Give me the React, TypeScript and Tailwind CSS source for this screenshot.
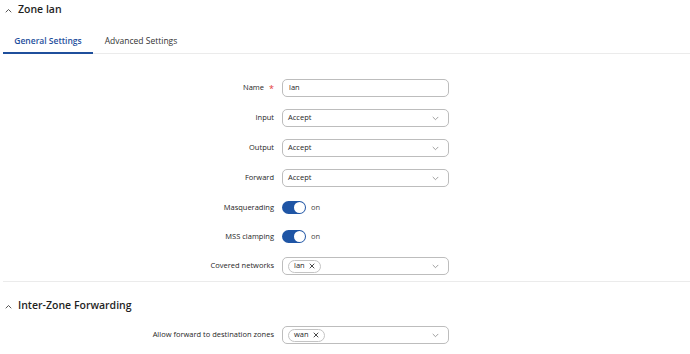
import React from 'react';

const font = { fontFamily: '"Open Sans", "Noto Sans", sans-serif' };

const Chevron = () => (
  <svg width="7" height="5" viewBox="0 0 7 5" className="text-[#888]">
    <path d="M1 1.2l2.5 2.5L6 1.2" fill="none" stroke="currentColor" strokeWidth="0.8" strokeLinecap="round" strokeLinejoin="round" />
  </svg>
);

const Caret = () => (
  <svg width="7" height="5" viewBox="0 0 7 5" className="text-[#444]">
    <path d="M1 4l2.5-2.5L6 4" fill="none" stroke="currentColor" strokeWidth="0.9" strokeLinecap="round" strokeLinejoin="round" />
  </svg>
);

const Row: React.FC<{ label: string; required?: boolean; h: string; children: React.ReactNode }> = ({ label, required, h, children }) => (
  <div className={`flex items-center ${h}`}>
    <div className="w-[274px] flex justify-end items-center text-[7.5px] text-[#262626]">
      <span>{label}</span>
      {required && <span className="ml-[5px] text-[#e53935] text-[9px] leading-none">*</span>}
    </div>
    <div className="ml-[8px]">{children}</div>
  </div>
);

const Select = ({ value }: { value: string }) => (
  <div className="w-[167px] h-[18px] rounded-[5px] border border-[#bdbdbd] flex items-center justify-between pl-[5px] pr-[9px] text-[7.5px] text-[#262626]">
    <span>{value}</span>
    <Chevron />
  </div>
);

const Chip = ({ text }: { text: string }) => (
  <span className="h-[13px] rounded-full border border-[#c4c4c4] px-[5px] flex items-center gap-[4px] text-[7.5px] text-[#262626]">
    {text}
    <svg width="6" height="6" viewBox="0 0 6 6">
      <path d="M1 1l4 4M5 1L1 5" stroke="#333" strokeWidth="0.9" strokeLinecap="round" />
    </svg>
  </span>
);

const MultiSelect = ({ value }: { value: string }) => (
  <div className="w-[167px] h-[18px] rounded-[5px] border border-[#bdbdbd] flex items-center justify-between pl-[5px] pr-[9px]">
    <Chip text={value} />
    <Chevron />
  </div>
);

const Toggle = () => (
  <div className="flex items-center gap-[5px]">
    <div className="w-[24px] h-[13px] rounded-full bg-[#1f55a5] flex items-center justify-end pr-[1px]">
      <div className="w-[11px] h-[11px] rounded-full bg-white" />
    </div>
    <span className="text-[7.5px] text-[#444]">on</span>
  </div>
);

export default function App() {
  return (
    <div className="w-[690px] h-[354px] bg-white overflow-hidden" style={font}>
      <div className="h-[20px] flex items-center gap-[6px] pl-[5px]">
        <Caret />
        <span className="text-[10.5px] font-semibold text-[#1f1f1f]">Zone lan</span>
      </div>

      <div className="mt-[10px] flex border-b border-[#ebebeb] ml-[3px] h-[24px]">
        <div className="w-[90px] flex items-center justify-center border-b-2 border-[#1f4f9c] -mb-px text-[8.5px] font-semibold text-[#1f4f9c]">
          General Settings
        </div>
        <div className="w-[96px] flex items-center justify-center text-[8.5px] text-[#333]">
          Advanced Settings
        </div>
      </div>

      <div className="mt-[19px]">
        <Row label="Name" required h="h-[30px]">
          <div className="w-[167px] h-[18px] rounded-[5px] border border-[#bdbdbd] flex items-center pl-[6px] text-[7.5px] text-[#262626]">lan</div>
        </Row>
        <Row label="Input" h="h-[30px]"><Select value="Accept" /></Row>
        <Row label="Output" h="h-[30px]"><Select value="Accept" /></Row>
        <Row label="Forward" h="h-[30px]"><Select value="Accept" /></Row>
        <Row label="Masquerading" h="h-[29px]"><Toggle /></Row>
        <Row label="MSS clamping" h="h-[29px]"><Toggle /></Row>
        <Row label="Covered networks" h="h-[30px]"><MultiSelect value="lan" /></Row>
      </div>

      <div className="ml-[3px] border-t border-[#ebebeb]" />

      <div className="h-[20px] mt-[14px] flex items-center gap-[6px] pl-[5px]">
        <Caret />
        <span className="text-[10.5px] font-semibold text-[#1f1f1f]">Inter-Zone Forwarding</span>
      </div>

      <div className="mt-[9px]">
        <Row label="Allow forward to destination zones" h="h-[20px]"><MultiSelect value="wan" /></Row>
      </div>
    </div>
  );
}
